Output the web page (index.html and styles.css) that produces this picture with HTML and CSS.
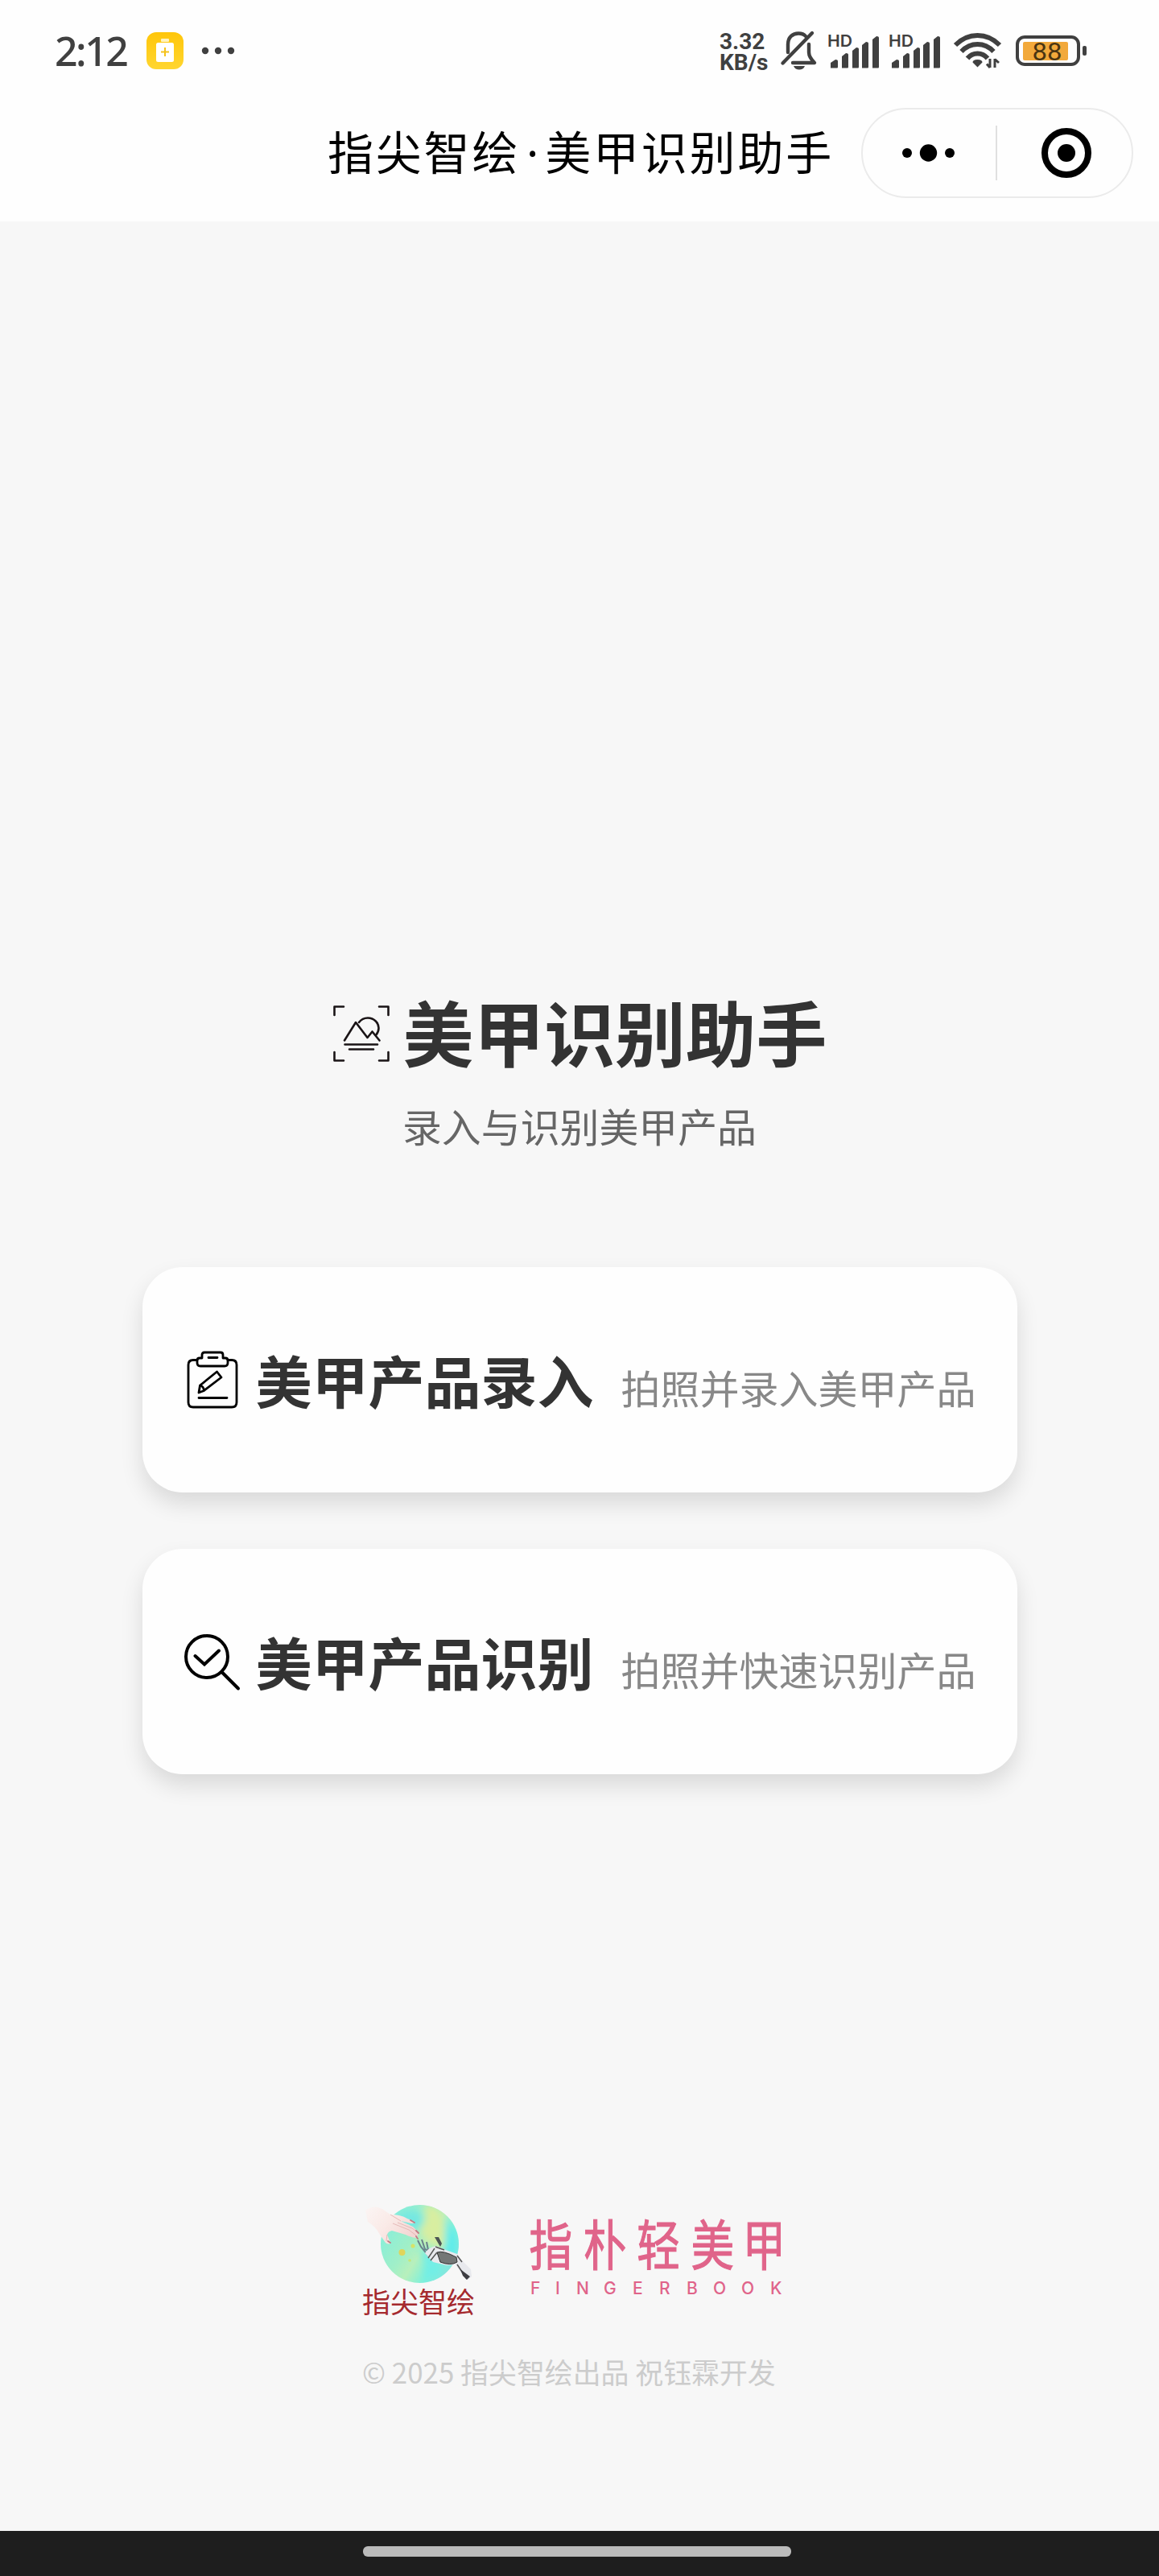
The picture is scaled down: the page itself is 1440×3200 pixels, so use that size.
FILE: index.html
```html
<!DOCTYPE html>
<html lang="zh-CN">

<head>
    <meta charset="UTF-8">
    <meta name="viewport" content="width=device-width, initial-scale=1.0">
    <title>指尖智绘·美甲识别助手</title>
    <link rel="stylesheet" href="styles.css">
</head>

<body>
    <header>
        <div class="status-bar">
            <span class="time">2:12</span>
            <svg class="app-icon" width="46" height="46" viewBox="0 0 46 46">
                <defs>
                    <linearGradient id="yellow" x1="0" y1="0" x2="0" y2="1">
                        <stop offset="0" stop-color="#ffc60a"/>
                        <stop offset="1" stop-color="#ffd630"/>
                    </linearGradient>
                </defs>
                <rect width="46" height="46" rx="12" fill="url(#yellow)"/>
                <rect x="18" y="8" width="10" height="4" rx="1" fill="#fff3c0"/>
                <rect x="12" y="13" width="22" height="24" rx="2.500" fill="#fff"/>
                <path d="M23 19v11M18 24.500h10" stroke="#f5c21b" stroke-width="2"/>
            </svg>
            <svg class="more" width="42" height="10" viewBox="0 0 42 10" fill="#404040">
                <circle cx="5" cy="5" r="4.200"/>
                <circle cx="21" cy="5" r="4.200"/>
                <circle cx="37" cy="5" r="4.200"/>
            </svg>

            <div class="speed"><span>3.32</span><span>KB/s</span></div>
            <svg class="bell" width="46" height="50" viewBox="0 0 46 50" fill="none" stroke="#404040" stroke-width="4.400" stroke-linecap="round" stroke-linejoin="round">
                <path d="M9 27V17C9 8 15 3.500 22 3.500c4 0 7 1 9 3.500M35 17v10c0 5 2 8 7 13H15"/>
                <path d="M2.500 40.500L39 3"/>
                <path d="M16 44h14c-1 3-4 4.500-7 4.500s-6-1.500-7-4.500z" fill="#404040" stroke="none"/>
            </svg>
            <svg class="signal" width="64" height="44" viewBox="0 0 64 44" fill="#404040">
                <text x="-1" y="17" class="hd" textLength="31" lengthAdjust="spacingAndGlyphs">HD</text>
                <path d="M1 43.500V37l6-4q3 0 3 2v7q0 1.500-1 1.500zM15 43.500V29l5-4q3 0 3 2v15q0 1.500-1 1.500zM28 43.500V22l5-4q3 0 3 2v22q0 1.500-1 1.500zM40 43.500V15l5-4q3 0 3 2v29q0 1.500-1 1.500zM53 43.500V8l5-4q3 0 3 2v36q0 1.500-1 1.500z" transform="translate(2 0)"/>
            </svg>
            <svg class="signal" width="64" height="44" viewBox="0 0 64 44" fill="#404040">
                <text x="-1" y="17" class="hd" textLength="31" lengthAdjust="spacingAndGlyphs">HD</text>
                <path d="M1 43.500V37l6-4q3 0 3 2v7q0 1.500-1 1.500zM15 43.500V29l5-4q3 0 3 2v15q0 1.500-1 1.500zM28 43.500V22l5-4q3 0 3 2v22q0 1.500-1 1.500zM40 43.500V15l5-4q3 0 3 2v29q0 1.500-1 1.500zM53 43.500V8l5-4q3 0 3 2v36q0 1.500-1 1.500z" transform="translate(2 0)"/>
            </svg>
            <svg class="wifi" width="60" height="46" viewBox="0 0 60 46">
                <g fill="none" stroke="#404040" stroke-width="6">
                    <path d="M2 16Q14 4 29.500 4T57 16"/>
                    <path d="M9.500 24Q18 15 29.500 15T49.500 24"/>
                    <path d="M17 32.500Q22 26.500 29.500 26.500T42 32.500"/>
                </g>
                <path d="M29.500 43.500l-6-6q0-3.500 6-3.500t6 3.500z" fill="#404040"/>
                <path d="M45 33v11M45 44l-4-4.500M51 44V33M51 33.500l5 4.500" fill="none" stroke="#404040" stroke-width="3"/>
            </svg>
            <svg class="battery" width="90" height="38" viewBox="0 0 90 38">
                <rect x="2" y="2" width="76" height="34" rx="9" fill="none" stroke="#404040" stroke-width="4"/>
                <rect x="9" y="8" width="56" height="23" rx="2" fill="#f2a93b"/>
                <rect x="83" y="13" width="5" height="12" rx="2" fill="#404040"/>
                <text x="20.500" y="30.500" class="level" textLength="37" lengthAdjust="spacingAndGlyphs">88</text>
            </svg>
        </div>

        <div class="nav-bar">
            <div class="nav-title">指尖智绘<span class="dot">·</span>美甲识别助手</div>
            <div class="capsule">
                <svg width="66" height="24" viewBox="0 0 66 24">
                    <circle cx="7" cy="12" r="6"/>
                    <circle cx="33.500" cy="12" r="10.700"/>
                    <circle cx="60" cy="12" r="6"/>
                </svg>
                <span class="divider"></span>
                <svg width="64" height="64" viewBox="0 0 64 64">
                    <circle cx="32" cy="32" r="27" fill="none" stroke="#000" stroke-width="8"/>
                    <circle cx="32" cy="32" r="11"/>
                </svg>
            </div>
        </div>
    </header>

    <main>
        <div class="hero">
            <svg width="72" height="72" viewBox="0 0 72 72" fill="none" stroke="#1a1416" stroke-width="2.600" stroke-linecap="round" stroke-linejoin="round">
                <path d="M2.500 13V2.500H14M58 2.500H69.500V13M2.500 59V69.500H14M58 69.500H69.500V59"/>
                <path d="M15 44.500L29 22L43.500 41L49.500 33.500L58.500 44.500"/>
                <path d="M33 22C36 18 39 16.500 44 16.500C52 16.500 57.500 23 57.500 29C57.500 33 56.500 35 54 38"/>
                <path d="M15.500 49.500H56M21 55.500H51"/>
            </svg>
            <h1>美甲识别助手</h1>
        </div>
        <p class="subtitle">录入与识别美甲产品</p>

        <div class="card">
            <!-- clipboard -->
            <svg width="70" height="72" viewBox="0 0 70 72" fill="none" stroke="#000" stroke-width="2.800" stroke-linecap="round" stroke-linejoin="round">
                <path d="M17 11.500H12Q6 11.500 6 17.500V64Q6 70 12 70H60Q66 70 66 64V17.500Q66 11.500 60 11.500H55"/>
                <path d="M23 9V5Q23 2 26 2H46Q49 2 49 5V9H52Q55 9 55 12V15Q55 19 51 19H21Q17 19 17 15V12Q17 9 20 9zM31 8.500H42"/>
                <path d="M20.500 43L41.500 26L47 33L25.500 49.500L19 52zM20.500 43Q25 44 25.500 49.500M19 58.500H54"/>
            </svg>
            <div class="card-text">
                <h2>美甲产品录入</h2>
                <span>拍照并录入美甲产品</span>
            </div>
        </div>

        <div class="card">
            <!-- magnifier -->
            <svg width="70" height="72" viewBox="0 0 70 72" fill="none" stroke="#000" stroke-width="4" stroke-linecap="round" stroke-linejoin="round">
                <circle cx="29" cy="30" r="26"/>
                <path d="M47.500 49L68 69.500"/>
                <path d="M14.500 29L26 39.500L44 22.500" stroke-linejoin="miter"/>
            </svg>
            <div class="card-text">
                <h2>美甲产品识别</h2>
                <span>拍照并快速识别产品</span>
            </div>
        </div>
    </main>

    <footer>
        <div class="logos">
            <svg width="150" height="160" viewBox="0 0 150 160">
                <defs>
                    <linearGradient id="globe" x1="0.150" y1="0.200" x2="0.950" y2="0.700">
                        <stop offset="0" stop-color="#8aeed8"/>
                        <stop offset="0.350" stop-color="#a0efc8"/>
                        <stop offset="0.550" stop-color="#b8f0bc"/>
                        <stop offset="0.800" stop-color="#7df0dc"/>
                        <stop offset="1" stop-color="#86e6dc"/>
                    </linearGradient>
                    <linearGradient id="skin" x1="0" y1="0" x2="1" y2="0.600">
                        <stop offset="0" stop-color="#fbf5f4"/>
                        <stop offset="0.500" stop-color="#faeae7"/>
                        <stop offset="1" stop-color="#f3d5d2"/>
                    </linearGradient>
                    <filter id="soft" x="-30%" y="-30%" width="160%" height="160%">
                        <feGaussianBlur stdDeviation="5"/>
                    </filter>
                    <clipPath id="disc"><circle cx="71.500" cy="67.500" r="48.500"/></clipPath>
                </defs>
                <circle cx="71.500" cy="67.500" r="48.500" fill="url(#globe)"/>
                <g clip-path="url(#disc)">
                    <g filter="url(#soft)">
                        <path d="M36 42Q54 18 74 30Q78 42 68 52L50 44z" fill="#74e8e2"/>
                        <path d="M76 20Q96 14 102 40Q108 60 98 76Q80 66 70 50Q84 40 76 20z" fill="#d8eea0"/>
                        <path d="M104 34Q124 60 114 90L102 74z" fill="#5cecec"/>
                        <path d="M58 68Q84 76 76 112L100 106L90 80z" fill="#72eee6"/>
                    </g>
                </g>
                <circle cx="49.500" cy="78" r="4" fill="#e0d45a"/>
                <circle cx="63" cy="70" r="2.500" fill="#d6e268"/>
                <circle cx="59" cy="88" r="1.800" fill="#c5e87a"/>
                <!-- human hand -->
                <path d="M4 26Q14 18 25 24L35 31Q48 31 56 36L65 40Q65 42 61 42L48 39L63 46L70 53L68 60Q62 60 54 56L37 51Q32 52 31 56L35 66Q34 69 29 66L22 56Q17 46 7 40z" fill="url(#skin)"/>
                <path d="M35 31L48 39M38 42L58 50L67 57M44 41L62 48L69 53M31 56L30 64" fill="none" stroke="#dfaead" stroke-width="0.800"/>
                <path d="M60 38l5 3M67 51l3 3M67 58l2 3M32 64l3 2" stroke="#c07b83" stroke-width="1.800" stroke-linecap="round"/>
                <!-- robot hand -->
                <path d="M69 63L73 71L83 83M74 62L78 74L86 78M80 65L82 75" fill="none" stroke="#69818a" stroke-width="2"/>
                <path d="M90 59L95 59L99 67L97 71z" fill="#4c5553"/>
                <path d="M78 79Q82 72 92 70L104 75L118 80L126 90L135 99L136 108L131 112L123 104L116 93L105 94L88 90z" fill="#e8e9ed"/>
                <path d="M93 78Q100 75 117 84L118 90Q110 95 97 90z" fill="#747776" stroke="#333" stroke-width="1"/>
                <path d="M82 85l8-12M85 88l8-10M91 71l11 4M118 82l6 8M118 93l12 18" fill="none" stroke="#555" stroke-width="1.500"/>
                <path d="M122 99L134 108L130 112L125 107z" fill="#3d3d42"/>
                <text x="0" y="153" class="logo-name">指尖智绘</text>
            </svg>
            <svg class="brand" width="320" height="110" viewBox="0 0 320 110">
                <g class="brand-name" transform="scale(0.800 1)">
                    <text x="-3 81 164 248 328" y="60">指朴轻美甲</text>
                </g>
                <text class="brand-en" x="-1 30 56 90 126 159 193 226 261 297" y="96">FINGERBOOK</text>
            </svg>
        </div>
        <p class="copyright">© 2025 指尖智绘出品 祝钰霖开发</p>
    </footer>

    <div class="home-bar"><span></span></div>
</body>

</html>
```

FILE: styles.css
```css
body {
    font-family: "Noto Sans CJK SC", sans-serif;
    background-color: #f7f7f7;
    margin: 0;
    height: 3200px;
    display: flex;
    flex-direction: column;
    color: #333;
}

h1, h2, p {
    margin: 0;
}

svg {
    display: block;
    flex: none;
    overflow: visible;
}

header {
    height: 275px;
    background-color: #fefefe;
}

.status-bar {
    height: 126px;
    display: flex;
    align-items: center;
    padding-left: 68px;
    color: #404040;
}

.time {
    width: 114px;
    font-family: "Noto Sans", sans-serif;
    font-size: 50px;
    font-weight: 500;
    letter-spacing: -2.5px;
    line-height: 50px;
}

.more {
    margin-left: 22px;
}

.speed {
    display: flex;
    flex-direction: column;
    width: 76px;
    margin-left: 602px;
    padding-top: 4px;
    font-family: Roboto, sans-serif;
    font-size: 28px;
    font-weight: 700;
    line-height: 26px;
}

.signal {
    margin-left: 12px;
}

.bell + .signal {
    margin-left: 13px;
}

.hd {
    font-family: Inter, sans-serif;
    font-size: 20px;
    font-weight: 600;
}

.wifi {
    margin-left: 16px;
}

.battery {
    margin-left: 17px;
}

.level {
    font-family: Roboto, sans-serif;
    font-size: 31px;
    fill: #4a3512;
}

.nav-bar {
    display: flex;
    align-items: center;
    height: 128px;
    padding-left: 407px;
}

.nav-title {
    width: 663px;
    margin-top: -8px;
    font-size: 57px;
    letter-spacing: 2.8px;
    line-height: 80px;
    color: #000;
    white-space: nowrap;
}

.dot {
    display: inline-block;
    width: 31px;
    font-family: "Noto Sans", sans-serif;
    letter-spacing: 0;
    line-height: 60px;
    text-align: center;
}

.capsule {
    display: flex;
    align-items: center;
    box-sizing: border-box;
    width: 338px;
    height: 112px;
    padding-left: 48px;
    border: 2px solid #ebebeb;
    border-radius: 56px;
}

.divider {
    width: 2px;
    height: 68px;
    margin: 0 54px 0 51px;
    background-color: #e0e0e0;
}

main {
    display: flex;
    flex-direction: column;
    align-items: center;
    height: 2435px;
    box-sizing: border-box;
    padding-top: 944px;
}

.hero {
    display: flex;
    align-items: center;
    gap: 16px;
    height: 130px;
}

h1 {
    margin-top: -8px;
    font-size: 87.800px;
    line-height: 130px;
}

.subtitle {
    margin-top: 14px;
    margin-bottom: 141px;
    font-size: 48.900px;
    line-height: 70px;
    color: #666;
}

.card {
    display: flex;
    align-items: center;
    justify-content: center;
    gap: 19px;
    box-sizing: border-box;
    width: 1087px;
    height: 280px;
    margin-left: 1px;
    margin-bottom: 70px;
    background-color: #fefefe;
    border-radius: 50px;
    box-shadow: 0 14px 28px rgba(0, 0, 0, 0.12);
}

.card-text {
    display: flex;
    align-items: baseline;
    gap: 34px;
}

.card h2 {
    font-size: 70px;
    line-height: 100px;
}

.card span {
    font-size: 49px;
    color: #888;
}

footer {
    height: 434px;
    box-sizing: border-box;
    padding: 10px 0 0 450px;
}

.logos {
    display: flex;
    gap: 60px;
}

.logo-name {
    font-size: 35px;
    fill: #a52a2e;
}

.brand {
    margin-top: 34px;
}

.brand-name {
    font-size: 67px;
    fill: #e0648a;
    stroke: #e0648a;
    stroke-width: 1.2;
}

.brand-en {
    font-family: Inter, sans-serif;
    font-size: 21px;
    font-weight: 500;
    fill: #e0648a;
}

.copyright {
    margin-top: 41px;
    font-size: 34.900px;
    line-height: 50px;
    color: #ccc;
}

.home-bar {
    display: flex;
    justify-content: center;
    height: 56px;
    background-color: #1e1e1e;
}

.home-bar span {
    width: 532px;
    height: 13px;
    margin-top: 19px;
    margin-right: 6px;
    border-radius: 6px;
    background-color: #bbb;
}
```
